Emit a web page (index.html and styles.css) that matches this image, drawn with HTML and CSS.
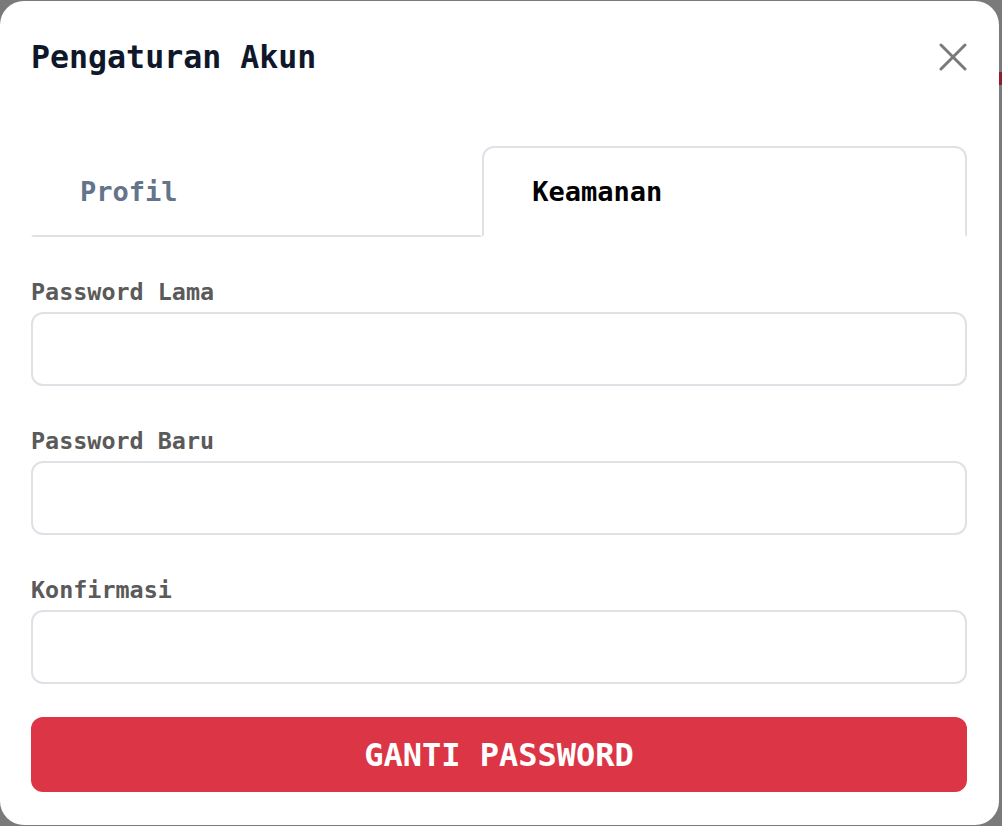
FILE: index.html
```html
<!DOCTYPE html>
<html lang="id">
<head>
<meta charset="utf-8">
<title>Pengaturan Akun</title>
<link rel="stylesheet" href="styles.css">
</head>
<body>
<div class="behind-mark"></div>
<div class="modal">
  <div class="modal-header">
    <h1 class="modal-title">Pengaturan Akun</h1>
    <button class="close-btn" aria-label="Tutup">
      <svg width="28" height="28" viewBox="0 0 28 28" fill="none" stroke="#7a7a7a" stroke-width="3" stroke-linecap="round">
        <line x1="2" y1="2" x2="26" y2="26"/>
        <line x1="26" y1="2" x2="2" y2="26"/>
      </svg>
    </button>
  </div>
  <div class="tabs">
    <div class="tab">Profil</div>
    <div class="tab active">Keamanan</div>
  </div>
  <form class="form">
    <div class="field">
      <label class="label">Password Lama</label>
      <input class="input" type="password">
    </div>
    <div class="field">
      <label class="label">Password Baru</label>
      <input class="input" type="password">
    </div>
    <div class="field">
      <label class="label">Konfirmasi</label>
      <input class="input" type="password">
    </div>
    <button type="button" class="submit">GANTI PASSWORD</button>
  </form>
</div>
</body>
</html>
```
FILE: styles.css
```css
html, body {
  margin: 0;
  padding: 0;
}
body {
  background: #7a7a7a;
  width: 1002px;
  height: 826px;
  overflow: hidden;
  position: relative;
  font-family: "DejaVu Sans Mono", "Liberation Mono", monospace;
}
.behind-mark {
  position: absolute;
  left: 999px;
  top: 72px;
  width: 3px;
  height: 13px;
  background: #8c1f33;
}
.modal {
  margin-top: 1px;
  width: 999px;
  height: 824px;
  box-sizing: border-box;
  background: #fff;
  border-radius: 24px;
  padding: 0 32px 0 31px;
  display: flex;
  flex-direction: column;
}
.modal-header {
  height: 112px;
  display: flex;
  align-items: center;
  justify-content: space-between;
}
.modal-title {
  margin: 0;
  font-size: 31.6px;
  line-height: 40px;
  font-weight: 700;
  color: #0f172a;
}
.close-btn {
  border: 0;
  background: transparent;
  padding: 0;
  width: 28px;
  height: 28px;
  display: flex;
  cursor: pointer;
}
.tabs {
  margin-top: 33px;
  display: flex;
}
.tab {
  flex: 1 1 auto;
  height: 91px;
  box-sizing: border-box;
  display: flex;
  align-items: center;
  padding: 0 48px;
  font-size: 27px;
  font-weight: 700;
  color: #64748b;
  border: 2px solid transparent;
  border-bottom-color: #dee2e6;
  border-radius: 12px 12px 0 0;
}
.tab:first-child {
  border-radius: 0;
  padding-left: 47px;
}
.tab.active {
  color: #000;
  border-color: #dee2e6;
  border-bottom-color: transparent;
}
.form {
  display: flex;
  flex-direction: column;
}
.field {
  margin-top: 43px;
  display: flex;
  flex-direction: column;
}
.label {
  font-size: 23.4px;
  line-height: 24px;
  font-weight: 700;
  color: #5a5a5a;
  margin-bottom: 8px;
}
.input {
  height: 74px;
  box-sizing: border-box;
  border: 2px solid #dee2e6;
  border-radius: 12px;
  background: #fff;
  font-family: inherit;
  font-size: 24px;
  padding: 0 18px;
  outline: none;
}
.submit {
  margin-top: 33px;
  height: 75px;
  border: 0;
  border-radius: 12px;
  background: #dc3545;
  color: #fff;
  font-family: "DejaVu Sans Mono", "Liberation Mono", monospace;
  font-size: 32px;
  font-weight: 700;
  cursor: pointer;
}
```
